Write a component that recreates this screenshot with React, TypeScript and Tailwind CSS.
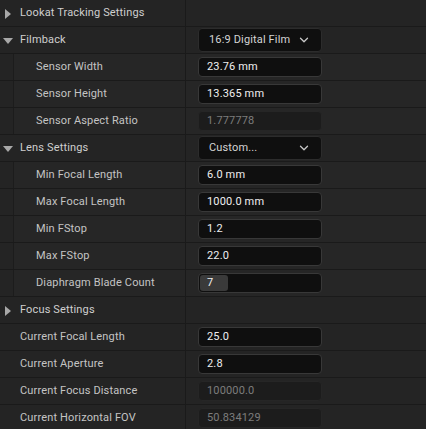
import { ChevronDown } from "lucide-react";

type Value =
  | { kind: "none" }
  | { kind: "combo"; text: string }
  | { kind: "input"; text: string }
  | { kind: "readonly"; text: string }
  | { kind: "slider"; text: string };

interface Row {
  label: string;
  group?: "open" | "closed";
  nested?: boolean;
  value: Value;
}

const rows: Row[] = [
  { label: "Lookat Tracking Settings", group: "closed", value: { kind: "none" } },
  { label: "Filmback", group: "open", value: { kind: "combo", text: "16:9 Digital Film" } },
  { label: "Sensor Width", nested: true, value: { kind: "input", text: "23.76 mm" } },
  { label: "Sensor Height", nested: true, value: { kind: "input", text: "13.365 mm" } },
  { label: "Sensor Aspect Ratio", nested: true, value: { kind: "readonly", text: "1.777778" } },
  { label: "Lens Settings", group: "open", value: { kind: "combo", text: "Custom..." } },
  { label: "Min Focal Length", nested: true, value: { kind: "input", text: "6.0 mm" } },
  { label: "Max Focal Length", nested: true, value: { kind: "input", text: "1000.0 mm" } },
  { label: "Min FStop", nested: true, value: { kind: "input", text: "1.2" } },
  { label: "Max FStop", nested: true, value: { kind: "input", text: "22.0" } },
  { label: "Diaphragm Blade Count", nested: true, value: { kind: "slider", text: "7" } },
  { label: "Focus Settings", group: "closed", value: { kind: "none" } },
  { label: "Current Focal Length", value: { kind: "input", text: "25.0" } },
  { label: "Current Aperture", value: { kind: "input", text: "2.8" } },
  { label: "Current Focus Distance", value: { kind: "readonly", text: "100000.0" } },
  { label: "Current Horizontal FOV", value: { kind: "readonly", text: "50.834129" } },
];

function Arrow({ open }: { open: boolean }) {
  return open ? (
    <svg width="10" height="6" viewBox="0 0 10 6" className="ml-[3px] mr-[7px]">
      <path d="M0 0H10L5 6Z" fill="#a8a8a8" />
    </svg>
  ) : (
    <svg width="6" height="10" viewBox="0 0 6 10" className="ml-[5px] mr-[9px]">
      <path d="M0 0L6 5L0 10Z" fill="#a8a8a8" />
    </svg>
  );
}

function ValueCell({ value }: { value: Value }) {
  switch (value.kind) {
    case "combo":
      return (
        <div className="flex h-[24px] w-[124px] items-center justify-between rounded-[4px] border border-[#2c2c2c] bg-[#0f0f0f] pl-[10px] pr-[10px] text-[#d4d4d4]">
          <span>{value.text}</span>
          <ChevronDown size={14} strokeWidth={2.2} className="text-[#c8c8c8]" />
        </div>
      );
    case "input":
      return (
        <div className="flex h-[20px] w-[124px] items-center rounded-[4px] border border-[#383838] bg-[#0f0f0f] pl-[8px] text-[#f0f0f0]">
          {value.text}
        </div>
      );
    case "readonly":
      return (
        <div className="flex h-[20px] w-[124px] items-center rounded-[4px] border border-[#262626] bg-[#1c1c1c] pl-[8px] text-[#7c7c7c]">
          {value.text}
        </div>
      );
    case "slider":
      return (
        <div className="flex h-[20px] w-[124px] items-center rounded-[4px] border border-[#383838] bg-[#0f0f0f] p-[1px]">
          <div className="flex h-full w-[28px] items-center rounded-[3px] bg-[#3a3a3a] pl-[7px] text-[#f0f0f0]">
            {value.text}
          </div>
        </div>
      );
    default:
      return null;
  }
}

export default function App() {
  return (
    <div
      className="h-[429px] w-[426px] overflow-hidden bg-[#242424] text-[11px] tracking-[0.15px]"
      style={{ fontFamily: "Roboto, 'Noto Sans', sans-serif" }}
    >
      {rows.map((row, i) => (
        <div key={i} className="flex h-[27px] border-b border-[#1a1a1a]">
          <div className="flex w-[185px] shrink-0">
            {row.nested && <div className="w-[14px] shrink-0 border-r border-[#1c1c1c] bg-[#242424]" />}
            <div
              className={`flex flex-1 items-center pt-[1px] ${row.nested ? "bg-[#262626] pl-[22px]" : "pl-0"} ${
                row.group ? "text-[#cfcfcf]" : "text-[#c4c4c4]"
              }`}
            >
              {row.group ? (
                <Arrow open={row.group === "open"} />
              ) : (
                !row.nested && <span className="w-[20px] shrink-0" />
              )}
              <span>{row.label}</span>
            </div>
          </div>
          <div className={`flex flex-1 items-center border-l border-[#1a1a1a] pl-[12px] ${row.nested ? "bg-[#262626]" : ""}`}>
            <ValueCell value={row.value} />
          </div>
        </div>
      ))}
    </div>
  );
}
